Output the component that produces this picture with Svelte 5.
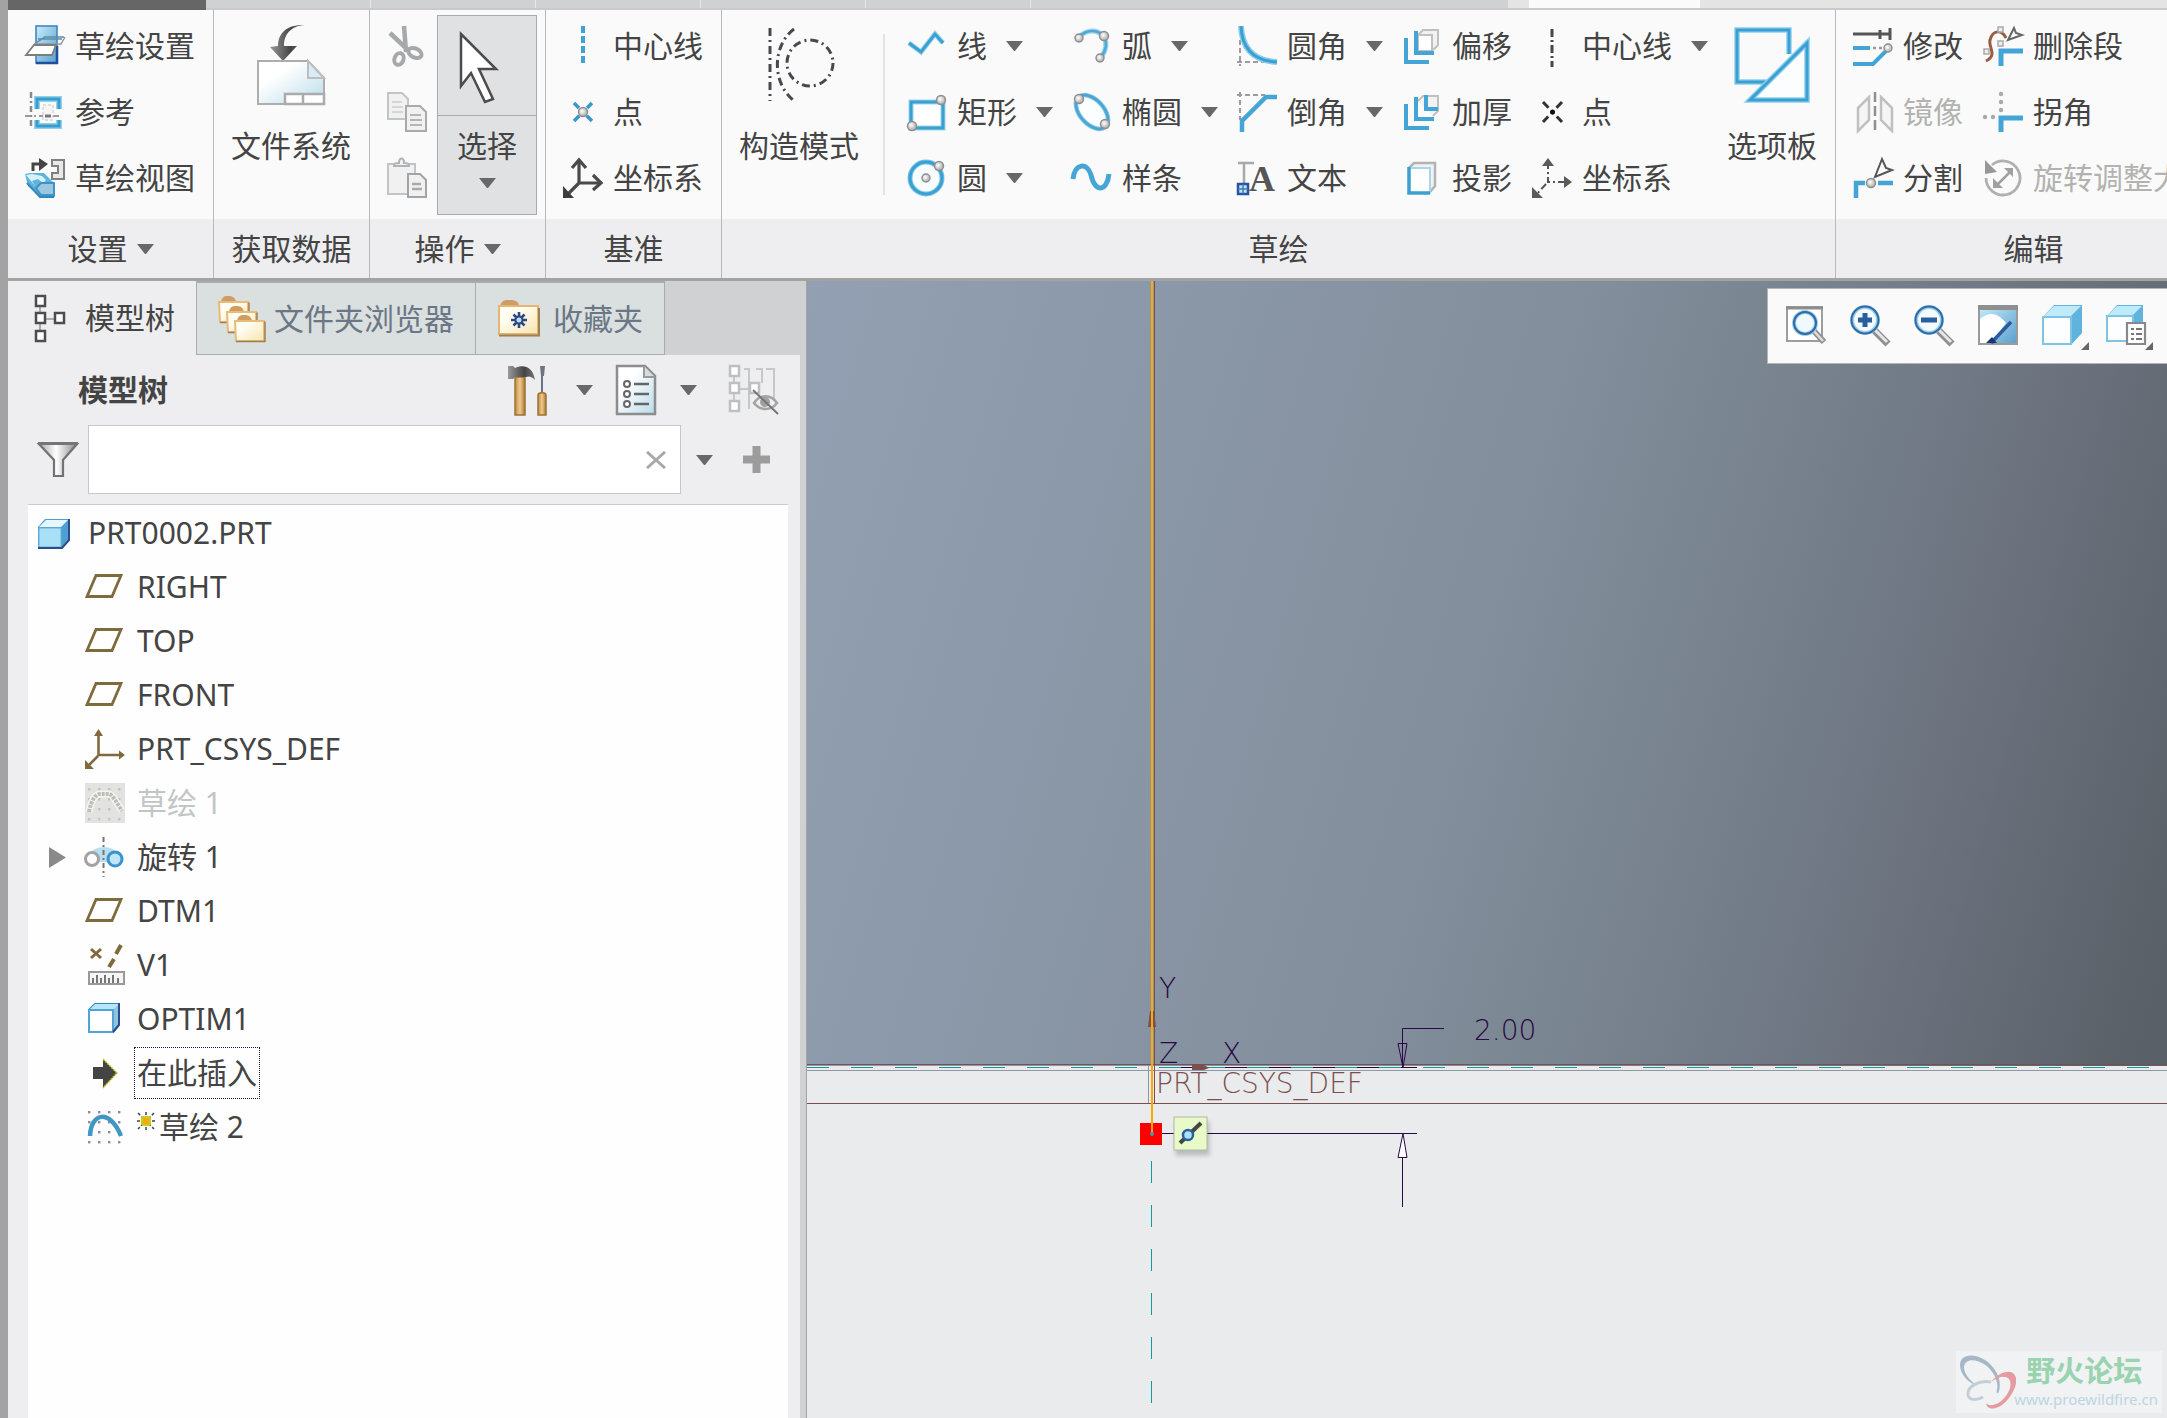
<script lang="ts">
	interface tool {
		label: string,
		icon: string,
		menu?: boolean,
		disabled?: boolean,
	}

	interface node {
		name: string,
		icon: string,
		root?: boolean,
		suppressed?: boolean,
		expandable?: boolean,
		insert?: boolean,
		fresh?: boolean,
	}

	// small helpers for handles that many icons share
	const dot = (x: number, y: number, r = 4) => `<circle cx="${x}" cy="${y}" r="${r}" fill="url(#ball)" stroke="#8d8d8d" stroke-width="1.4"/>`
	const box = (x: number, y: number) => `<rect x="${x}" y="${y}" width="9" height="10" fill="#fff"/>`
	const folder = (x: number, y: number) => `<path d="M${x + 3} ${y + 6}c1-5 3-6 7-6s7 1 8 6z" fill="#cf9c63"/><path d="M${x + 1} ${y + 6}h29v20h-28z" fill="url(#manila)" stroke="#e9bb78" stroke-width="2"/><path d="M${x + 2} ${y + 26.500}h29v-20" fill="none" stroke="#9c8250" stroke-width="1.500"/>`
	const grid = (xs: number[], ys: number[], c: string) => xs.flatMap(x => ys.map(y => `<rect x="${x}" y="${y}" width="2.4" height="2.4" fill="${c}"/>`)).join("")

	const plane = `<path d="M11 8.500h25l-9 21H2z" fill="#fff" stroke="#7f6a3c" stroke-width="2.800"/>`
	const lens = (x: number, y: number) => `<path d="M${x + 9} ${y + 10}l14 14" stroke="#8f8f8f" stroke-width="7"/><path d="M${x + 10} ${y + 10}l12 12" stroke="#e6e6e6" stroke-width="3"/><circle cx="${x}" cy="${y}" r="13" fill="#f4fbff" stroke="#9fcbe8" stroke-width="4"/><circle cx="${x}" cy="${y}" r="13.500" fill="none" stroke="#2c6ca8" stroke-width="2"/>`

	const icons: Record<string, string> = {
		sketchSetup: `<path d="M11 0h21v37H11z" fill="url(#sky)" stroke="#3a7fc0" stroke-width="1.500"/><path d="M11 37h21V20" fill="none" stroke="#1f4f9e" stroke-width="2.500"/><path d="M13 13h24M11 17l9-6h19" stroke="#5d8ca8" fill="none" stroke-width="1.500"/><path d="M9 18h27l4-7" fill="none" stroke="#8e9aa0" stroke-width="1.500"/><path d="M1 29l8-10h22l-4 10z" fill="#fff" stroke="#7d7d7d" stroke-width="1.800"/>`,
		references: `<path d="M6 0v37" stroke="#8b8b8b" stroke-width="2.500" stroke-dasharray="6 3 2 3"/><path d="M0 24h37" stroke="#9b9b9b" stroke-width="2" stroke-dasharray="6 3 2 3"/><path d="M12 17V7h22v10M12 28v6h22v-6" fill="none" stroke="#8fd0ee" stroke-width="6"/><path d="M12 17V7h22v10M12 28v6h22v-6" fill="none" stroke="#3a9ccc" stroke-width="3"/><rect x="18" y="13" width="10" height="15" fill="#f6f6f6" stroke="#c6c6c6" stroke-dasharray="3 2"/><path d="M20 24h6" stroke="#777" stroke-width="3"/>`,
		sketchView: `<path d="M8 13V6h7" fill="none" stroke="#444" stroke-width="3"/><path d="M14 0l9 6-9 7z" fill="#444"/><path d="M27 2h12v19H27v-6h6V8h-6z" fill="#e8e8e8" stroke="#808080" stroke-width="2"/><path d="M0 16l5-1h14l3 3 8 8v13H15L3 28z" fill="#5fb4de"/><path d="M1 17l6-1 10 2 4 4-3 3-5-4-6 2 4 6z" fill="#d7f1fb"/><path d="M11 30l5-5h13v12H16z" fill="#9cc7e0" stroke="#3e94c4" stroke-width="2"/><path d="M2 25l13 14h14" fill="none" stroke="#3187bb" stroke-width="2"/>`,
		cut: `<g fill="none" stroke="#a6a8aa"><path d="M17 0l2 26M3 7l19 18" stroke-width="4.500"/><ellipse cx="12" cy="33" rx="4.500" ry="6" stroke-width="4" transform="rotate(20 12 33)"/><ellipse cx="28" cy="27" rx="7" ry="4.500" stroke-width="4" transform="rotate(25 28 27)"/></g>`,
		copy: `<g fill="#f1f1f1" stroke="#c2c4c5" stroke-width="2"><path d="M1 1h14l6 6v20H1z"/><path d="M5 10h10M5 15h11M5 20h11" stroke="#d3d5d6"/><path d="M19 14h14l6 6v19H19z" stroke="#a8aaab"/><path d="M23 23h11M23 28h12M23 33h12" stroke="#b4b6b7"/></g>`,
		paste: `<g fill="#f1f1f1" stroke="#c2c4c5" stroke-width="2"><path d="M1 6h27v30H1z"/><path d="M7 8c0-3 2-3 5-3 0-6 5-6 5 0 3 0 5 0 5 3z" stroke="#b0b2b3"/><path d="M21 16h12l6 6v17H21z" stroke="#a2a4a5"/><path d="M25 26h9M25 31h10" stroke="#a8aaab" stroke-width="2.500"/></g>`,
		centerBlue: `<path d="M20 0v40" stroke="#3fa2d3" stroke-width="4" stroke-dasharray="7 3"/>`,
		pointBlue: `<path d="M11 11l18 18M29 11l-18 18" stroke="#3a97cc" stroke-width="3.500" stroke-dasharray="7 11 8"/>` + dot(20, 20, 4.5),
		csys: `<g fill="none" stroke="#4a4a4a" stroke-width="3.200"><path d="M16 3v22h21M16 25L3 38"/><path d="M9 10l7-8 7 8M30 17l8 8-8 7"/></g><path d="M0 28v12h11z" fill="#3c3c3c"/>`,
		line: `<path d="M2 17l12 9L28 8l8 9" fill="none" stroke="#9bd4ef" stroke-width="5"/><path d="M2 17l12 9L28 8l8 9" fill="none" stroke="#3a9fd1" stroke-width="3"/>`,
		rect: `<path d="M4 10h32v26H4z" fill="#fff" stroke="#9bd4ef" stroke-width="5"/><path d="M4 10h32v26H4z" fill="none" stroke="#3a9fd1" stroke-width="3"/>` + dot(34, 8, 4.5) + dot(5, 34, 4.5),
		circle: `<circle cx="19" cy="20" r="16" fill="#f8fdff" stroke="#7cc5e8" stroke-width="5"/><circle cx="19" cy="20" r="16" fill="none" stroke="#3a9fd1" stroke-width="3"/>` + dot(19, 20, 4) + dot(32, 8, 4.5),
		arc: `<path d="M7 11C16 2 27 4 32 11c4 7 2 14-4 22" fill="none" stroke="#9bd4ef" stroke-width="5"/><path d="M7 11C16 2 27 4 32 11c4 7 2 14-4 22" fill="none" stroke="#4fa8d6" stroke-width="2.500"/>` + dot(7, 12) + dot(32, 10, 4.5) + dot(28, 32),
		ellipse: `<ellipse cx="20" cy="20" rx="20" ry="12" transform="rotate(48 20 20)" fill="#fbfeff" stroke="#7cc5e8" stroke-width="4.500"/><ellipse cx="20" cy="20" rx="20" ry="12" transform="rotate(48 20 20)" fill="none" stroke="#4aa3d0" stroke-width="2.500"/>` + dot(7, 7, 4.5) + dot(33, 32, 4.5),
		spline: `<path d="M1 21C3 5 15 4 19 17c4 18 16 17 18-1" fill="none" stroke="#45a6d6" stroke-width="5"/>`,
		fillet: `<path d="M3 14v26M0 36h30" stroke="#9d9d9d" stroke-width="2" stroke-dasharray="5 3"/><path d="M4 0c1 24 14 35 36 36" fill="none" stroke="#8accea" stroke-width="6"/><path d="M4 0c1 24 14 35 36 36" fill="none" stroke="#3a9fd1" stroke-width="3"/>`,
		chamfer: `<path d="M3 0v28M0 3h28" stroke="#9d9d9d" stroke-width="2" stroke-dasharray="5 3"/><path d="M5 40V29L29 5h11" fill="none" stroke="#45a6d6" stroke-width="4.500"/>`,
		text: `<path d="M1 5h16M7 5v20" stroke="#a9a9a9" stroke-width="2.500"/><text x="12" y="33" font-family="Liberation Serif, serif" font-weight="bold" font-size="36" fill="#565656">A</text><rect x="1" y="26" width="10" height="10" fill="#bfe6f8" stroke="#27549c" stroke-width="2.500"/><path d="M6 26v10M1 31h10" stroke="#3f79b8" stroke-width="1.500"/>`,
		offset: `<path d="M16 9l5-5h15v15l-5 5" fill="#f2f2f2" stroke="#c0c0c0" stroke-width="2"/><path d="M16 9h14v16H16z" fill="#fff" stroke="#c0c0c0" stroke-width="2"/><path d="M14 5v22h18M4 12v24h23" fill="none" stroke="#43a5d5" stroke-width="4"/>`,
		thicken: `<path d="M16 9l5-5h15v15l-5 5" fill="#f2f2f2" stroke="#c0c0c0" stroke-width="2"/><path d="M14 5v22h18M4 12v24h23" fill="none" stroke="#43a5d5" stroke-width="4"/><path d="M24 3v14h12" fill="none" stroke="#43a5d5" stroke-width="4"/>`,
		project: `<path d="M7 10l5-5h21v23l-5 6" fill="#f2f2f2" stroke="#b3b3b3" stroke-width="2.500"/><path d="M7 10h21v25H7z" fill="#fff" stroke="#a6d7ee" stroke-width="2"/><path d="M7 9v26h21" fill="none" stroke="#3a9fd1" stroke-width="3.500"/>`,
		centerDark: `<path d="M20 3v38" stroke="#474747" stroke-width="3" stroke-dasharray="8 3 2 3"/>`,
		pointDark: `<path d="M11 10l19 20M30 10L11 30" stroke="#333" stroke-width="3" stroke-dasharray="8 4 4 4 8"/><circle cx="20.500" cy="20" r="2.500" fill="#111"/>`,
		csysDark: `<path d="M16 4v20h18M14 26L4 37" fill="none" stroke="#555" stroke-width="2" stroke-dasharray="7 3 2 3"/><path d="M10 8l6-8 6 8zM32 18l8 6-8 6zM0 29v11h11z" fill="#5a5a5a"/>`,
		modify: `<path d="M0 8h37M27 4v9M37 2v12" stroke="#555" stroke-width="3"/><path d="M0 22h17" stroke="#43a5d5" stroke-width="4"/><path d="M20 22h10" stroke="#999" stroke-width="2.500" stroke-dasharray="3 3"/><path d="M0 38h20l13-13" fill="none" stroke="#43a5d5" stroke-width="4"/>` + dot(35, 22, 4),
		mirror: `<path d="M5 16l11-11v23L5 39zM39 16L28 5v23l11 11z" fill="#f5f5f5" stroke="#c0c0c0" stroke-width="2.500"/><path d="M22 0v40" stroke="#8f8f8f" stroke-width="2.500" stroke-dasharray="10 4"/>`,
		divide: `<path d="M3 40V25h9M25 25h15" stroke="#43a5d5" fill="none" stroke-width="4.500"/>` + dot(18, 25, 4.5) + `<path d="M29 1l-7 18 17-7-6-2z" fill="#fff" stroke="#555" stroke-width="2"/>`,
		deleteSeg: `<path d="M18 40V25h22" fill="none" stroke="#43a5d5" stroke-width="5"/><path d="M3 35c12-6 2-14 4-21C10 3 19 4 23 12" fill="none" stroke="#985d40" stroke-width="3"/><g fill="#eee" stroke="#aaa" stroke-width="1.500"><path d="M15 1h5v5h-5zM15 15h5v5h-5zM1 23h5v5H1z"/></g><path d="M31 2l-6 12 14-5-6-2z" fill="#fff" stroke="#666" stroke-width="2"/>`,
		corner: `<g fill="#a9a9a9"><circle cx="18" cy="2" r="2.200"/><circle cx="18" cy="10" r="2.200"/><circle cx="18" cy="18" r="2.200"/><circle cx="2" cy="25" r="2.200"/><circle cx="10" cy="25" r="2.200"/></g><path d="M18 40V26h22" fill="none" stroke="#43a5d5" stroke-width="5"/>`,
		rotate: `<path d="M9 7a17 17 0 1 1-6 13" fill="none" stroke="#b0b0b0" stroke-width="2.800"/><path d="M2 2v14l12-2z" fill="#989898"/><path d="M13 28l15-15" stroke="#a0a0a0" stroke-width="2.500"/><path d="M30 10v9l-9-9zM10 20v10h10z" fill="#a0a0a0"/>`,
		fileSystem: `<path d="M54 0C39 1 33 10 33 21h13L32 36 19 22l8-1C27 8 36-1 54 0z" fill="url(#steel)"/><path d="M7 36h50l16 17v26H7z" fill="url(#sheet)" stroke="#adadad" stroke-width="2"/><path d="M57 36v17h16z" fill="#d4edf8" stroke="#bdbdbd" stroke-width="2"/><path d="M34 69h39v10H34zM52 69v10" fill="#fff" stroke="#ababab" stroke-width="2.500"/>`,
		cursor: `<path d="M14 9l35 35H32l14 30-8 3-14-29-10 13z" fill="#fff" stroke="#4c4c4c" stroke-width="2.500"/>`,
		construction: `<g fill="none" stroke="#4a4650" stroke-width="3" stroke-dasharray="8 4 2 4"><path d="M11 3v73"/><path d="M35 4C14 20 12 56 34 75"/><circle cx="51" cy="38" r="23"/></g>`,
		palette: `<path d="M36 57H5V5h52v24" fill="none" stroke="#8fd0f0" stroke-width="5.500"/><path d="M36 57H5V5h52v24" fill="none" stroke="#3a9fd1" stroke-width="3"/><path d="M18 75l57-57v57z" fill="#fbfdfe" stroke="#8fd0f0" stroke-width="5.500"/><path d="M18 75l57-57v57z" fill="none" stroke="#3a9fd1" stroke-width="3"/>`,
		modelTree: `<path d="M11 12v30M16 25h12" stroke="#aaa" stroke-width="2"/><g stroke="#4c4c4c" stroke-width="2.500">${box(7, 2)}${box(7, 19)}${box(7, 37)}${box(26, 19)}</g>`,
		folders: folder(0, 1) + folder(8, 11) + folder(16, 20),
		favorites: `<path d="M3 13c1-7 3-8 9-8s9 1 10 5h19v6H3z" fill="#cf9c63"/><path d="M2 11h39v28H2z" fill="url(#manila)" stroke="#e5b673" stroke-width="2"/><path d="M2 40.500h40V13" fill="none" stroke="#9c8250" stroke-width="2"/><path d="M22 17v16M14 25h16M16.500 19.500l11 11M27.500 19.500l-11 11" stroke="#29498c" stroke-width="2.600"/><circle cx="22" cy="25" r="3.500" fill="#c6dcf2" stroke="#29498c" stroke-width="2"/>`,
		hammer: `<path d="M8 12h10v38H8z" fill="url(#wood)" stroke="#9b7436" stroke-width="1.500"/><path d="M1 1h5l2 2c8-4 18-2 20 12-5-5-7-3-9-3H8l-2 2H1z" fill="url(#steel)"/><path d="M33 1h5l-1 10h-1v17h-2V11z" fill="#6b7480"/><path d="M31 30c0-3 8-3 8 0v20h-8z" fill="url(#wood)" stroke="#9b7436" stroke-width="1.500"/>`,
		settings: `<path d="M6 1h28l10 10v38H6z" fill="url(#sheet)" stroke="#8d8d8d" stroke-width="2.500"/><path d="M33 1v11h11" fill="#d9dcde" stroke="#999" stroke-width="2"/><g fill="#fff" stroke="#666" stroke-width="2"><circle cx="16" cy="19" r="3"/><circle cx="16" cy="29" r="3"/><circle cx="16" cy="39" r="3"/><path d="M23 19h15M23 29h15M23 39h15" stroke-width="2.500"/></g>`,
		hideTree: `<path d="M16 4h5v40M28 4h6v14M38 4h8v34M6 12v30M12 24h10" stroke="#c5c8c8" stroke-width="2" fill="none"/><g stroke="#bcc0c0" stroke-width="2.500">${box(2, 1)}${box(2, 18)}${box(2, 36)}${box(22, 18)}</g><path d="M26 38c6-9 17-9 23 0-6 8-17 8-23 0z" fill="#eee" stroke="#a4a4a4" stroke-width="2.500"/><circle cx="37" cy="37" r="5" fill="#a0a0a0"/><path d="M25 25l25 24" stroke="#757575" stroke-width="2"/>`,
		filter: `<path d="M1 4h38L25 20v16h-9V20z" fill="url(#funnel)" stroke="#727272" stroke-width="2.200"/><path d="M0 3.500h40" stroke="#757575" stroke-width="3"/>`,
		part: `<path d="M1 14l7-8h24v21l-7 8H1z" fill="#4f9fd0"/><path d="M2 14l7-7h22l-7 7z" fill="#e6f7fd"/><path d="M2 15h22v19H2z" fill="#a9e0f6" stroke="#62b4dd"/><path d="M32 6v21l-7 8H1" fill="none" stroke="#2b4d8e" stroke-width="2"/>`,
		plane,
		treeCsys: `<path d="M13.500 4v22H37M13 27L4 36" fill="none" stroke="#7f6a3c" stroke-width="2.600"/><path d="M9 7l4.500-7L18 7zM34 21.500l6 4.500-6 4.500zM0 31v9h9z" fill="#7f6a3c"/>`,
		sketchOff: `<path d="M0 0h40v40H0z" fill="#e2e3e1"/>${grid([3, 13, 23, 33], [5, 15, 25, 35], "#c3c4bc")}<path d="M4 29C6 17 11 11 15 11h9c3 0 8 9 13 17" fill="none" stroke="#f4f4f2" stroke-width="7"/><path d="M4 29C6 17 11 11 15 11h9c3 0 8 9 13 17" fill="none" stroke="#bfbdb4" stroke-width="4" stroke-dasharray="3 1"/>`,
		revolve: `<path d="M3 19c6-12 26-12 31 0v6H6z" fill="#b9def0"/><circle cx="7" cy="22" r="6.500" fill="#fff" stroke="#a3a3a3" stroke-width="3"/><circle cx="30" cy="22" r="7" fill="#bfe6fa" stroke="#3a93cc" stroke-width="3"/><path d="M18.500 0v40" stroke="#777" stroke-width="2" stroke-dasharray="5 3 2 3"/>`,
		variable: `<path d="M6 4l10 9M16 4L6 13" stroke="#7f6a3c" stroke-width="3"/><path d="M36 0l-5 9M29 14l-5 8" stroke="#7f6a3c" stroke-width="4"/><path d="M4 27h35v12H4z" fill="#f5f5f5" stroke="#999" stroke-width="2"/><path d="M8 38v-5M12 38v-8M16 38v-5M20 38v-8M24 38v-5M28 38v-8M33 38v-5" stroke="#777" stroke-width="2"/>`,
		optim: `<path d="M4 11l6-6h24v21l-6 7" fill="#8fc3de" stroke="#3287bd" stroke-width="2"/><path d="M4 11l6-6h24l-6 6z" fill="#b5e6f9"/><path d="M4 11h24v22H4z" fill="#fff" stroke="#4ea5d3" stroke-width="2"/><path d="M34 4v22l-6 7" fill="none" stroke="#2b4d8e" stroke-width="2"/>`,
		insert: `<path d="M8 14h10V6l14 14-14 15v-9H8z" fill="#444"/><path d="M18 6l14 14-14 15" fill="none" stroke="#c9c81f" stroke-width="1.500" stroke-dasharray="2 1"/>`,
		sketchOn: `${grid([3, 13, 23, 33], [4, 14, 24, 34], "#8d8d98")}<path d="M5 29C6 5 25 2 36 29" fill="none" stroke="#3d98c6" stroke-width="4.500"/>`,
		refit: `<path d="M1 2h35v34H1z" fill="#fff" stroke="#9d9d9d" stroke-width="2"/><path d="M0 3h37" stroke="#8d8d8d" stroke-width="3"/><path d="M27 25l11 12" stroke="#8f8f8f" stroke-width="6"/><path d="M27 25l10 11" stroke="#ddd" stroke-width="2.500"/><circle cx="19" cy="18" r="11" fill="#effaff" stroke="#9fcbe8" stroke-width="4"/><circle cx="19" cy="18" r="11" fill="none" stroke="#2c6ca8" stroke-width="2"/>`,
		zoomIn: lens(15, 15) + `<path d="M15 8v14M8 15h14" stroke="#2a5f9e" stroke-width="5"/>`,
		zoomOut: lens(15, 15) + `<path d="M7 15h16" stroke="#2a5f9e" stroke-width="5"/>`,
		repaint: `<path d="M1 1h38v38H1z" fill="url(#sky)" stroke="#9a9a9a" stroke-width="2"/><path d="M2 38V14c12-10 20-3 26 4L13 38z" fill="#fff"/><path d="M0 2.500h40" stroke="#8f8f8f" stroke-width="5"/><path d="M33 17L13 38" stroke="#2d5b9b" stroke-width="3.500"/><path d="M8 38l6-6 5 6z" fill="#1c3470"/>`,
		shaded: `<path d="M1 12L12 0h28v28L29 40H1z" fill="#5fb3dc"/><path d="M2 11L12 1h27L29 11z" fill="#bfeafa"/><path d="M1 12h28v27H1z" fill="#fdfeff" stroke="#7cc5e6" stroke-width="2"/>`,
		saved: `<path d="M1 11L11 0h26v26L27 37H1z" fill="#5fb3dc"/><path d="M2 10L11 1h25l-9 9z" fill="#bfeafa"/><path d="M1 11h26v25H1z" fill="#fdfeff" stroke="#7cc5e6" stroke-width="2"/><path d="M21 18h18v21H21z" fill="#fff" stroke="#888" stroke-width="2.200"/><path d="M25 24h3M30 24h6M25 29h3M30 29h6M25 34h3M30 34h6" stroke="#777" stroke-width="2"/>`,
	}

	const setup: tool[] = [
		{ label: "草绘设置", icon: "sketchSetup" },
		{ label: "参考", icon: "references" },
		{ label: "草绘视图", icon: "sketchView" },
	]
	const clipboard: tool[] = [
		{ label: "剪切", icon: "cut" },
		{ label: "复制", icon: "copy" },
		{ label: "粘贴", icon: "paste" },
	]
	const datum: tool[] = [
		{ label: "中心线", icon: "centerBlue" },
		{ label: "点", icon: "pointBlue" },
		{ label: "坐标系", icon: "csys" },
	]
	const sketch: tool[] = [
		{ label: "线", icon: "line", menu: true },
		{ label: "矩形", icon: "rect", menu: true },
		{ label: "圆", icon: "circle", menu: true },
		{ label: "弧", icon: "arc", menu: true },
		{ label: "椭圆", icon: "ellipse", menu: true },
		{ label: "样条", icon: "spline" },
		{ label: "圆角", icon: "fillet", menu: true },
		{ label: "倒角", icon: "chamfer", menu: true },
		{ label: "文本", icon: "text" },
		{ label: "偏移", icon: "offset" },
		{ label: "加厚", icon: "thicken" },
		{ label: "投影", icon: "project" },
		{ label: "中心线", icon: "centerDark", menu: true },
		{ label: "点", icon: "pointDark" },
		{ label: "坐标系", icon: "csysDark" },
	]
	const edit: tool[] = [
		{ label: "修改", icon: "modify" },
		{ label: "镜像", icon: "mirror", disabled: true },
		{ label: "分割", icon: "divide" },
		{ label: "删除段", icon: "deleteSeg" },
		{ label: "拐角", icon: "corner" },
		{ label: "旋转调整大小", icon: "rotate", disabled: true },
	]

	const tabs = [
		{ label: "模型树", icon: "modelTree" },
		{ label: "文件夹浏览器", icon: "folders" },
		{ label: "收藏夹", icon: "favorites" },
	]

	const nodes: node[] = [
		{ name: "PRT0002.PRT", icon: "part", root: true },
		{ name: "RIGHT", icon: "plane" },
		{ name: "TOP", icon: "plane" },
		{ name: "FRONT", icon: "plane" },
		{ name: "PRT_CSYS_DEF", icon: "treeCsys" },
		{ name: "草绘 1", icon: "sketchOff", suppressed: true },
		{ name: "旋转 1", icon: "revolve", expandable: true },
		{ name: "DTM1", icon: "plane" },
		{ name: "V1", icon: "variable" },
		{ name: "OPTIM1", icon: "optim" },
		{ name: "在此插入", icon: "insert", insert: true },
		{ name: "草绘 2", icon: "sketchOn", fresh: true },
	]

	const view = [
		{ label: "重新调整", icon: "refit" },
		{ label: "放大", icon: "zoomIn" },
		{ label: "缩小", icon: "zoomOut" },
		{ label: "重画", icon: "repaint" },
		{ label: "显示样式", icon: "shaded", menu: true },
		{ label: "已保存方向", icon: "saved", menu: true },
	]

	let activeTab = $state("模型树")
	let query = $state("")
</script>

{#snippet icon(name: string, size = 40)}
	<svg class="icon" width={size} height={size} viewBox="0 0 {size} {size}" aria-hidden="true">{@html icons[name]}</svg>
{/snippet}

{#snippet arrow()}
	<svg class="arrow" width="17" height="10" viewBox="0 0 17 10" aria-hidden="true"><path d="M0 0h17L9 10H8z" fill="#686868" /></svg>
{/snippet}

{#snippet toolButton(t: tool)}
	<button class="tool" disabled={t.disabled}>
		{@render icon(t.icon)}
		<span>{t.label}</span>
		{#if t.menu}<span class="drop">{@render arrow()}</span>{/if}
	</button>
{/snippet}

<!-- gradients used by the icons -->
<svg class="defs" width="0" height="0" aria-hidden="true">
	<defs>
		<radialGradient id="ball" cx=".4" cy=".4"><stop offset="0" stop-color="#fff" /><stop offset="1" stop-color="#b9b9b9" /></radialGradient>
		<linearGradient id="sky" x2="1" y2="1"><stop offset="0" stop-color="#c5ecfb" /><stop offset="1" stop-color="#5a9fcb" /></linearGradient>
		<linearGradient id="sheet" x2="1" y2="1"><stop offset=".3" stop-color="#fff" /><stop offset="1" stop-color="#b9dcea" /></linearGradient>
		<linearGradient id="steel" x2="1"><stop offset="0" stop-color="#999" /><stop offset=".6" stop-color="#444" /><stop offset="1" stop-color="#777" /></linearGradient>
		<linearGradient id="manila" x2="1" y2="1"><stop offset=".3" stop-color="#fffef2" /><stop offset="1" stop-color="#f8e3b0" /></linearGradient>
		<linearGradient id="wood" x2="1"><stop offset="0" stop-color="#c08a45" /><stop offset=".5" stop-color="#f2c98c" /><stop offset="1" stop-color="#a8773a" /></linearGradient>
		<linearGradient id="funnel" x2="1"><stop offset="0" stop-color="#a5a5a5" /><stop offset=".45" stop-color="#fff" /><stop offset="1" stop-color="#888" /></linearGradient>
	</defs>
</svg>

<div class="app">
	<div class="menu-strip">
		<span class="file"></span>
		{#each [1, 2, 3, 4, 5] as n (n)}<span class="menu"></span>{/each}
		<span class="menu last"></span>
		<span class="current"></span>
	</div>

	<header class="ribbon">
		<section class="group">
			<div class="tools">
				<div class="cols">{#each setup as t}{@render toolButton(t)}{/each}</div>
			</div>
			<button class="caption">设置 {@render arrow()}</button>
		</section>

		<section class="group">
			<div class="tools">
				<button class="big">{@render icon("fileSystem", 80)}<span>文件系统</span></button>
			</div>
			<div class="caption">获取数据</div>
		</section>

		<section class="group ops">
			<div class="tools">
				<div class="cols">
					{#each clipboard as t}
						<button class="tool" aria-label={t.label} disabled>{@render icon(t.icon)}</button>
					{/each}
				</div>
				<button class="big select">{@render icon("cursor", 80)}<span>选择</span>{@render arrow()}</button>
			</div>
			<button class="caption">操作 {@render arrow()}</button>
		</section>

		<section class="group">
			<div class="tools">
				<div class="cols">{#each datum as t}{@render toolButton(t)}{/each}</div>
			</div>
			<div class="caption">基准</div>
		</section>

		<section class="group">
			<div class="tools">
				<button class="big">{@render icon("construction", 80)}<span>构造模式</span></button>
				<i class="rule"></i>
				<div class="cols sketch">{#each sketch as t}{@render toolButton(t)}{/each}</div>
				<button class="big">{@render icon("palette", 80)}<span>选项板</span></button>
			</div>
			<div class="caption">草绘</div>
		</section>

		<section class="group">
			<div class="tools">
				<div class="cols edit">{#each edit as t}{@render toolButton(t)}{/each}</div>
			</div>
			<div class="caption">编辑</div>
		</section>
	</header>

	<main>
		<aside>
			<div class="tabs" role="tablist">
				{#each tabs as t}
					<button role="tab" class="tab" class:active={t.label === activeTab} aria-selected={t.label === activeTab} onclick={() => activeTab = t.label}>
						{@render icon(t.icon, 48)}<span>{t.label}</span>
					</button>
				{/each}
			</div>

			<div class="panel">
				<div class="panel-head">
					<h2>模型树</h2>
					<button class="menu-btn" aria-label="工具">{@render icon("hammer", 50)}{@render arrow()}</button>
					<button class="menu-btn" aria-label="设置">{@render icon("settings", 50)}{@render arrow()}</button>
					<button aria-label="显示">{@render icon("hideTree", 50)}</button>
				</div>

				<div class="search">
					{@render icon("filter")}
					<div class="field">
						<input aria-label="过滤" bind:value={query} />
						<button aria-label="清除" onclick={() => query = ""}>
							<svg width="20" height="18" viewBox="0 0 20 18"><path d="M1 1l18 16M19 1L1 17" stroke="#a9a9a9" stroke-width="3" /></svg>
						</button>
					</div>
					<button class="more" aria-label="选项">{@render arrow()}</button>
					<button aria-label="添加">
						<svg width="27" height="27" viewBox="0 0 27 27"><path d="M13.500 0v27M0 13.500h27" stroke="#9c9c9c" stroke-width="8" /></svg>
					</button>
				</div>

				<ul class="tree">
					{#each nodes as n}
						<li class:root={n.root} class:suppressed={n.suppressed}>
							{#if n.expandable}
								<button class="expander" aria-label="展开">
									<svg width="17" height="21" viewBox="0 0 17 21"><path d="M0 0l17 10.500L0 21z" fill="#8a8a8a" /></svg>
								</button>
							{/if}
							{@render icon(n.icon)}
							{#if n.fresh}
								<svg class="star" width="18" height="18" viewBox="0 0 18 18"><path d="M1 1l16 16M17 1L1 17M9 0v18M0 9h18" stroke="#444" stroke-width="1.500" stroke-dasharray="3 2" /><rect x="4" y="4" width="10" height="10" rx="3" fill="#c4cf1c" /><rect x="6" y="6" width="6" height="6" fill="#f7a614" /></svg>
							{/if}
							<span class:insert={n.insert}>{n.name}</span>
						</li>
					{/each}
				</ul>
			</div>
		</aside>

		<div class="canvas">
			<div class="model"></div>
			<svg class="drawing" width="100%" height="100%">
				<line x1="0" x2="100%" y1="783.500" y2="783.500" stroke="#7a4f4f" />
				<line x1="0" x2="100%" y1="789.500" y2="789.500" stroke="#8f97a5" />
				<line x1="0" x2="100%" y1="786.500" y2="786.500" stroke="#0f9c9c" stroke-dasharray="22 22" />
				<line x1="374" x2="595" y1="786.500" y2="786.500" stroke="#2a0845" stroke-dasharray="22 22" />
				<line x1="0" x2="100%" y1="822.500" y2="822.500" stroke="#7a4f4f" />
				<path d="M341.500 785v37" stroke="#8f97a5" />
				<path d="M347.500 0v822" stroke="#7a4f4f" />
				<path d="M341 746l2-16h4l2 16zM385 784h12l5 3-5 2h-12z" fill="#7a4f4f" />
				<line x1="344.500" x2="344.500" y1="880" y2="100%" stroke="#0f9c9c" stroke-dasharray="22 22" />
				<rect x="333" y="842" width="22" height="22" fill="#f00" />
				<path d="M345 0v852" stroke="#ffa800" stroke-width="2" />
				<circle cx="345" cy="853" r="2" fill="#3f9cb0" />
				<g fill="none" stroke="#2a0845">
					<path d="M355 852.500h255M595.500 786v-38.500H637M594 786.500h16M595.500 877v49" />
					<path d="M591 762.500h9l-4 24z" />
					<path d="M591 876.500h9l-4-24z" fill="#fff" />
				</g>
				<g class="stroke-font">
					<text x="352" y="717">Y</text>
					<text x="352" y="782">Z</text>
					<text x="415" y="782">X</text>
					<text x="667" y="759">2.00</text>
					<text class="csys-name" x="349" y="812">PRT_CSYS_DEF</text>
				</g>
				<g class="constraint">
					<rect x="367" y="836" width="33" height="33" fill="#e8fac8" stroke="#b4b8a8" />
					<path d="M373 862l21-20" stroke="#454545" stroke-width="4" />
					<circle cx="381" cy="854" r="5" fill="#a9e0fa" stroke="#2c5f9e" stroke-width="2.500" />
				</g>
			</svg>

			<div class="view-bar">
				{#each view as v}
					<button aria-label={v.label} class:flyout={v.menu}>{@render icon(v.icon)}</button>
				{/each}
			</div>

			<div class="watermark">
				<svg width="58" height="58" viewBox="0 0 58 58" fill="none" aria-hidden="true">
					<g fill-rule="evenodd">
						<path d="M2 12C2 2 14-1 27 7c12 8 17 21 14 31-1 4-3 2-2-1 2-9-4-20-13-26C16 5 7 6 6 14c0 7 6 14 14 19-10-3-18-12-18-21z" fill="#a6b8c7" />
						<path d="M33 29c7-9 18-13 23-8 6 7-1 22-12 31-7 5-15 5-16-2 2 3 8 3 14-1 9-7 13-18 9-23-4-4-11-2-18 3z" fill="#e59ba0" />
					</g>
					<path d="M33 29c-12-2-24 4-23 13 1 5 8 6 15 2" stroke="#c3ced6" stroke-width="3" />
				</svg>
				<div>
					<b>野火论坛</b>
					<span>www.proewildfire.cn</span>
				</div>
			</div>
		</div>
	</main>
</div>

<style>
	:global(body) {
		margin: 0;
		background: #a3a3a3;
	}
	.defs {
		position: absolute;
	}
	.app {
		box-sizing: border-box;
		min-height: 100vh;
		padding-left: 8px;
		display: flex;
		flex-direction: column;
		overflow: hidden;
		background: #a3a3a3;
		color: #444;
		font-family: "Noto Sans", "Noto Sans CJK SC", sans-serif;
		font-size: 30px;
		line-height: 40px;
	}
	button {
		margin: 0;
		padding: 0;
		border: 0;
		background: none;
		color: inherit;
		font: inherit;
		white-space: nowrap;
	}
	.icon,
	.arrow {
		display: block;
		flex: none;
		overflow: visible;
	}

	.menu-strip {
		height: 8px;
		display: flex;
		background: #e4e4e2;
		border-bottom: 2px solid #c8c9cb;
	}
	.file {
		width: 198px;
		height: 10px;
		background: #666;
	}
	.menu {
		box-sizing: border-box;
		width: 165px;
		background: #d0d1d3;
		border-right: 1px solid #e8e8e8;
	}
	.menu.last {
		width: 477px;
		border-right: 0;
	}
	.current {
		width: 171px;
		margin-left: 21px;
		background: #fafafa;
	}

	.ribbon {
		display: flex;
		background: #eeeef0;
		border-bottom: 3px solid #a3a3a3;
	}
	.group {
		flex: none;
		display: flex;
		flex-direction: column;
		border-right: 1px solid #b8b9bb;
	}
	.tools {
		box-sizing: border-box;
		height: 209px;
		padding: 3px 18px 0 17px;
		display: flex;
		background: #fafafa;
	}
	.caption {
		height: 59px;
		display: flex;
		align-items: center;
		justify-content: center;
		gap: 9px;
	}
	.cols {
		display: grid;
		grid-template-rows: repeat(3, 66px);
		grid-auto-flow: column;
	}
	.cols.sketch {
		grid-template-columns: repeat(3, 165px) 130px auto;
		margin-right: 19px;
	}
	.cols.edit {
		column-gap: 20px;
	}
	.tool {
		display: flex;
		align-items: center;
		gap: 10px;
	}
	.tool:disabled {
		color: #b2b2b0;
	}
	.drop {
		padding-left: 9px;
	}
	.big {
		height: 201px;
		padding-top: 12px;
		display: flex;
		flex-direction: column;
		align-items: center;
		gap: 21px;
	}
	.rule {
		width: 2px;
		height: 161px;
		margin: 21px 22px 0 24px;
		background: #e4e4e6;
	}
	.ops .tools {
		padding-right: 8px;
		gap: 10px;
	}
	.select {
		box-sizing: border-box;
		width: 100px;
		height: 200px;
		margin-top: 2px;
		padding-top: 9px;
		border: 1px solid #a9aaac;
		background: linear-gradient(#a9aaac, #a9aaac) 0 99px / 100% 1px no-repeat #e0e1e3;
	}
	.select .arrow {
		margin-top: -9px;
	}

	main {
		flex: 1;
		display: flex;
	}
	aside {
		box-sizing: border-box;
		flex: 0 0 37%;
		display: flex;
		flex-direction: column;
		padding-right: 6px;
		border-right: 1px solid #a3a3a3;
		background: #d0d1d2;
	}
	.tabs {
		display: flex;
		height: 74px;
	}
	.tab {
		box-sizing: border-box;
		padding: 0 21px;
		display: flex;
		align-items: center;
		gap: 8px;
		background: #dadfdf;
		border: solid #a9acac;
		border-width: 2px 1px 1px 0;
		color: #6b7785;
	}
	.tab.active {
		background: #eeeef0;
		border-width: 0 1px 0 0;
		color: #444;
	}
	.panel {
		flex: 1;
		display: flex;
		flex-direction: column;
		background: #eeeef0;
	}
	.panel-head {
		height: 70px;
		padding: 0 22px 0 70px;
		display: flex;
		align-items: center;
	}
	h2 {
		flex: 1;
		margin: 0;
		font-size: 30px;
		font-weight: bold;
	}
	.menu-btn {
		display: flex;
		align-items: center;
		gap: 19px;
		margin-right: 18px;
	}
	.menu-btn + .menu-btn {
		margin-right: 31px;
	}
	.search {
		height: 69px;
		padding: 0 30px;
		display: flex;
		align-items: center;
	}
	.field {
		flex: 1;
		box-sizing: border-box;
		height: 69px;
		margin-left: 10px;
		padding-right: 14px;
		display: flex;
		align-items: center;
		background: #fff;
		border: 1px solid #c5c6c8;
	}
	input {
		flex: 1;
		min-width: 0;
		padding: 0 12px;
		border: 0;
		outline: 0;
		font: inherit;
		color: inherit;
	}
	.field svg,
	.search > button svg {
		display: block;
	}
	.more {
		margin: 0 30px 0 15px;
	}

	.tree {
		flex: 1;
		margin: 10px 12px 0 20px;
		padding: 1px 0 0;
		list-style: none;
		background: #fffeff;
		border-top: 1px solid #cacbcd;
	}
	.tree li {
		position: relative;
		height: 54px;
		padding-left: 57px;
		display: flex;
		align-items: center;
		gap: 12px;
	}
	.tree li.root {
		padding-left: 9px;
		gap: 11px;
	}
	.suppressed {
		color: #c2c5c5;
	}
	.expander {
		position: absolute;
		left: 21px;
	}
	.expander svg {
		display: block;
	}
	.insert {
		margin-left: -3px;
		padding: 5px 2px;
		border: 1px dotted #2a0845;
	}
	.star {
		flex: none;
		align-self: flex-start;
		margin: 12px -8px 0 0;
	}

	.canvas {
		position: relative;
		flex: 1;
		min-width: 0;
		overflow: hidden;
		background: #e9ebec;
	}
	.model {
		height: 785px;
		background: linear-gradient(106deg, #93a0b3 0%, #8a97a7 26%, #828e9b 50%, #76818d 66%, #6b727e 81%, #5a6067 98%);
	}
	.drawing {
		position: absolute;
		inset: 0;
	}
	.stroke-font {
		font-family: "DejaVu Sans", "DejaVu Sans Light", sans-serif;
		font-size: 28px;
		font-weight: 200;
		fill: #2a0845;
	}
	.csys-name {
		fill: #7a4f4f;
	}
	.constraint {
		filter: drop-shadow(2px 5px 2px #0003);
	}
	.view-bar {
		position: absolute;
		top: 7px;
		right: 0;
		padding: 16px 21px 18px 18px;
		display: flex;
		gap: 24px;
		background: #fafafa;
		border: 1px solid #b5b5b5;
		border-right: 0;
	}
	.view-bar button {
		position: relative;
	}
	.flyout::after {
		content: "";
		position: absolute;
		right: -7px;
		bottom: -5px;
		border: solid transparent;
		border-width: 4px;
		border-right-color: #666;
		border-bottom-color: #666;
	}
	.watermark {
		position: absolute;
		right: 5px;
		bottom: 5px;
		height: 62px;
		padding: 0 4px 0 2px;
		display: flex;
		align-items: center;
		background: #f0f2f3;
	}
	.watermark div {
		display: flex;
		flex-direction: column;
	}
	.watermark b {
		padding-left: 10px;
		color: #9ad3af;
		font-size: 29px;
		line-height: 34px;
	}
	.watermark span {
		margin-left: -2px;
		color: #bcd6e0;
		font-size: 15px;
		line-height: 22px;
	}
</style>
